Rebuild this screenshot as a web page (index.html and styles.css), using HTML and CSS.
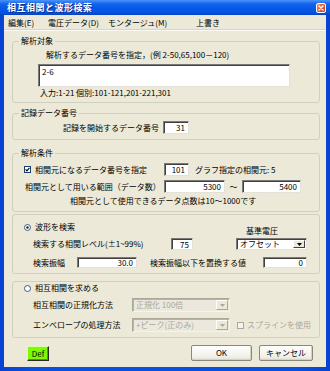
FILE: index.html
```html
<!DOCTYPE html>
<html lang="ja">
<head>
<meta charset="utf-8">
<title>相互相関と波形検索</title>
<link rel="stylesheet" href="styles.css">
</head>
<body>
<div class="window">
  <div class="titlebar">
    <span class="title">相互相関と波形検索</span>
    <span class="close">
      <svg width="10" height="10" viewBox="0 0 10 10">
        <defs>
          <linearGradient id="cg" x1="0" y1="0" x2="1" y2="1">
            <stop offset="0" stop-color="#f08a6a"/>
            <stop offset="1" stop-color="#c83a12"/>
          </linearGradient>
        </defs>
        <rect x="0.5" y="0.5" width="9" height="9" rx="1.5" fill="url(#cg)" stroke="#fff" stroke-width="1"/>
        <path d="M3 3 L7 7 M7 3 L3 7" stroke="#fff" stroke-width="1.4" stroke-linecap="round"/>
      </svg>
    </span>
  </div>
  <div class="client">
    <div class="menubar">
      <span class="menu m1">編集(E)</span>
      <span class="menu m2">電圧データ(D)</span>
      <span class="menu m3">モンタージュ(M)</span>
      <span class="menu m4">上書き</span>
    </div>
    <div class="content">
      <fieldset class="group g1">
        <legend>解析対象</legend>
        <div class="hint">解析するデータ番号を指定，(例 2-50,65,100－120)</div>
        <div class="textarea">2-6</div>
        <div class="inputinfo">入力:1-21 個別:101-121,201-221,301</div>
      </fieldset>

      <fieldset class="group g2">
        <legend>記録データ番号</legend>
        <div class="rec-row">
          <span class="rec-label">記録を開始するデータ番号</span>
          <span class="field num w26">31</span>
        </div>
      </fieldset>

      <fieldset class="group g3">
        <legend>解析条件</legend>
        <div class="cond-row1">
          <span class="check-label">
            <span class="check">
              <svg width="7" height="7" viewBox="0 0 7 7"><rect x="0.5" y="0.5" width="6" height="6" fill="#fff" stroke="#1c3f6e"/><path d="M1.6 3.4 L2.9 4.8 L5.4 1.8" fill="none" stroke="#000" stroke-width="1.1"/></svg>
            </span>
            相関元になるデータ番号を指定
          </span>
          <span class="field num w25">101</span>
          <span class="graph-src">グラフ指定の相関元: 5</span>
        </div>
        <div class="cond-row2">
          <span class="range-label">相関元として用いる範囲（データ数）</span>
          <span class="field num w61">5300</span>
          <span class="tilde">～</span>
          <span class="field num w59">5400</span>
        </div>
        <div class="cond-note">相関元として使用できるデータ点数は10～1000です</div>
      </fieldset>

      <div class="box box-search">
        <div class="search-rowa">
          <span class="radio-label">
            <span class="radio">
              <svg width="7" height="7" viewBox="0 0 7 7"><circle cx="3.5" cy="3.5" r="3" fill="#fff" stroke="#3a5a80"/><circle cx="3.5" cy="3.5" r="1.2" fill="#222"/></svg>
            </span>
            波形を検索
          </span>
          <span class="ref-label">基準電圧</span>
        </div>
        <div class="search-rowb">
          <span class="level-label">検索する相関レベル(±1~99%)</span>
          <span class="field num w22">75</span>
          <span class="select w71">
            <span class="select-text">オフセット</span>
            <span class="select-btn"><svg width="5" height="3" viewBox="0 0 5 3"><path d="M0 0 H5 L2.5 3 Z" fill="#000"/></svg></span>
          </span>
        </div>
        <div class="search-rowc">
          <span class="amp-label">検索振幅</span>
          <span class="field num w60">30.0</span>
          <span class="repl-label">検索振幅以下を置換する値</span>
          <span class="field num w44">0</span>
        </div>
      </div>

      <div class="box box-corr">
        <div class="corr-rowa">
          <span class="radio-label">
            <span class="radio">
              <svg width="7" height="7" viewBox="0 0 7 7"><circle cx="3.5" cy="3.5" r="3" fill="#fff" stroke="#3a5a80"/></svg>
            </span>
            相互相関を求める
          </span>
        </div>
        <div class="corr-row">
          <span class="corr-label">相互相関の正規化方法</span>
          <span class="select disabled w98">
            <span class="select-text">正規化 100倍</span>
            <span class="select-btn"><svg width="5" height="3" viewBox="0 0 5 3"><path d="M0 0 H5 L2.5 3 Z" fill="#aca899"/></svg></span>
          </span>
        </div>
        <div class="corr-row">
          <span class="corr-label">エンベロープの処理方法</span>
          <span class="select disabled w98">
            <span class="select-text">+ピーク(正のみ)</span>
            <span class="select-btn"><svg width="5" height="3" viewBox="0 0 5 3"><path d="M0 0 H5 L2.5 3 Z" fill="#aca899"/></svg></span>
          </span>
          <span class="spline">
            <span class="check">
              <svg width="7" height="7" viewBox="0 0 7 7"><rect x="0.5" y="0.5" width="6" height="6" fill="#f4f3ee" stroke="#aca899"/></svg>
            </span>
            <span class="spline-text">スプラインを使用</span>
          </span>
        </div>
      </div>

      <div class="buttons">
        <span class="btn-def">Def</span>
        <span class="btn ok">OK</span>
        <span class="btn cancel">キャンセル</span>
      </div>
    </div>
  </div>
</div>
</body>
</html>
```
FILE: styles.css
```css
* { box-sizing: border-box; }
html, body { margin: 0; padding: 0; }
body {
  width: 330px;
  height: 371px;
  overflow: hidden;
  font-family: "Noto Sans CJK JP", "Noto Sans", sans-serif;
  font-size: 8px;
  line-height: 10px;
  color: #000;
  background: #0a4fdf;
}
.window {
  width: 330px;
  height: 371px;
  display: flex;
  flex-direction: column;
  background: linear-gradient(90deg, #0842d0, #0a50e0 10%, #0a50e0 90%, #0842d0);
}
.titlebar {
  height: 15px;
  flex: none;
  display: flex;
  align-items: center;
  justify-content: space-between;
  padding: 0 4px 0 7px;
  background: linear-gradient(#4a95f8 0%, #1664ec 25%, #0558e6 55%, #0652e0 85%, #0443c6 100%);
}
.title {
  color: #fff;
  font-weight: bold;
  font-size: 9px;
  letter-spacing: 0.5px;
  text-shadow: 1px 1px 0 #0a2d8a;
  line-height: 12px;
}
.close { width: 10px; height: 10px; display: flex; }
.client {
  flex: 1;
  margin: 0 4px 4px;
  background: #ece9d8;
  display: flex;
  flex-direction: column;
}
.menubar {
  height: 16px;
  flex: none;
  display: flex;
  align-items: center;
  padding-left: 4px;
  border-bottom: 1px solid #fbfaf6;
  box-shadow: 0 -1px 0 #d9d5c3 inset;
}
.menu { white-space: nowrap; }
.m1 { width: 40px; }
.m2 { width: 60px; }
.m3 { width: 88px; }
.m4 { width: 30px; }

.content {
  padding: 0 6px 0 8px;
  display: flex;
  flex-direction: column;
}
.group {
  margin: 0;
  padding: 0 0 4px;
  border: 1px solid #d0d0bf;
  border-radius: 3px;
  min-width: 0;
}
.group legend {
  padding: 0 2px;
  margin-left: 6px;
  line-height: 10px;
  white-space: nowrap;
}
.g1 { margin-top: 5px; }
.g2 { margin-top: 5px; padding-bottom: 5px; }
.g3 { margin-top: 8px; padding-bottom: 5px; }

.hint { margin-top: 4px; padding-left: 33px; white-space: nowrap; }
.textarea {
  margin: 4px 0 0 25px;
  width: 252px;
  height: 23px;
  background: #fff;
  border: 1px solid;
  border-color: #7a7a7a #e4e2d8 #e4e2d8 #7a7a7a;
  box-shadow: inset 1px 1px 0 #404040;
  padding: 2px 3px;
  line-height: 10px;
}
.inputinfo { margin-top: 1px; padding-left: 27px; white-space: nowrap; }

.field {
  display: flex;
  align-items: center;
  background: #fff;
  border: 1px solid;
  border-color: #7a7a7a #e4e2d8 #e4e2d8 #7a7a7a;
  box-shadow: inset 1px 1px 0 #404040;
  height: 100%;
  padding: 0 3px;
  white-space: nowrap;
  line-height: 9px;
}
.field.num { justify-content: flex-end; }
.w22 { width: 22px; }
.w25 { width: 25px; }
.w26 { width: 26px; }
.w44 { width: 44px; }
.w59 { width: 59px; }
.w60 { width: 60px; }
.w61 { width: 61px; }
.w71 { width: 71px; }
.w98 { width: 98px; }

.rec-row {
  margin-top: 3px;
  height: 13px;
  display: flex;
  align-items: center;
}
.rec-label { width: 150px; text-align: right; padding-right: 4px; white-space: nowrap; }

.cond-row1 {
  margin-top: 5px;
  height: 13px;
  display: flex;
  align-items: center;
  padding-left: 11px;
}
.check-label { width: 140px; display: flex; align-items: center; white-space: nowrap; }
.check { width: 7px; height: 7px; display: flex; margin-right: 4px; flex: none; }
.graph-src { margin-left: 6px; white-space: nowrap; }

.cond-row2 {
  margin-top: 4px;
  height: 13px;
  display: flex;
  align-items: center;
  padding-left: 12px;
}
.range-label { width: 139px; white-space: nowrap; }
.tilde { width: 17px; text-align: center; }
.cond-note { margin-top: 3px; padding-left: 57px; white-space: nowrap; }

.box {
  border: 1px solid #d0d0bf;
  border-radius: 3px;
  display: flex;
  flex-direction: column;
}
.box-search { margin-top: 2px; padding-bottom: 5px; }
.box-corr { margin-top: 7px; padding-bottom: 5px; }

.radio-label { display: flex; align-items: center; white-space: nowrap; }
.radio { width: 7px; height: 7px; display: flex; margin-right: 4px; flex: none; }

.search-rowa {
  margin-top: 7px;
  height: 10px;
  display: flex;
  align-items: flex-start;
  padding-left: 11px;
}
.search-rowa .radio-label { width: 222px; height: 10px; }
.ref-label { margin-top: 4px; white-space: nowrap; }

.search-rowb {
  margin-top: 6px;
  height: 12px;
  display: flex;
  align-items: center;
  padding-left: 20px;
}
.level-label { width: 138px; white-space: nowrap; }
.search-rowb .select { margin-left: 43px; }

.search-rowc {
  margin-top: 7px;
  height: 11px;
  display: flex;
  align-items: center;
  padding-left: 20px;
}
.amp-label { width: 44px; white-space: nowrap; }
.repl-label { width: 113px; margin-left: 13px; white-space: nowrap; }

.select {
  height: 100%;
  display: flex;
  align-items: stretch;
  background: #fff;
  border: 1px solid;
  border-color: #7a7a7a #e4e2d8 #e4e2d8 #7a7a7a;
  box-shadow: inset 1px 1px 0 #404040;
  padding: 1px;
}
.select-text {
  flex: 1;
  min-width: 0;
  padding-left: 2px;
  display: flex;
  align-items: center;
  white-space: nowrap;
  line-height: 8px;
}
.select-btn {
  width: 12px;
  flex: none;
  display: flex;
  align-items: center;
  justify-content: center;
  background: #ece9d8;
  border: 1px solid;
  border-color: #fff #404040 #404040 #fff;
}
.select.disabled { background: #ebe9dd; box-shadow: inset 1px 1px 0 #b8b4a4; border-color: #aca899 #f4f3ee #f4f3ee #aca899; }
.select.disabled .select-text { color: #aca899; }
.select.disabled .select-btn { border-color: #fff #aca899 #aca899 #fff; }

.corr-rowa {
  margin-top: 1px;
  height: 10px;
  display: flex;
  align-items: center;
  padding-left: 11px;
}
.corr-row {
  margin-top: 5px;
  height: 14px;
  display: flex;
  align-items: center;
  padding-left: 20px;
}
.corr-row + .corr-row { margin-top: 6px; }
.corr-label { width: 99px; white-space: nowrap; }
.spline { display: flex; align-items: center; margin-left: 7px; }
.spline .check { margin-right: 3px; }
.spline-text { color: #aca899; white-space: nowrap; }

.buttons {
  margin-top: 7px;
  height: 16px;
  display: flex;
  align-items: flex-end;
  padding-left: 15px;
  padding-right: 7px;
}
.btn-def {
  width: 22px;
  height: 15px;
  display: flex;
  align-items: center;
  justify-content: center;
  background: #7cfc00;
  border: 1px solid;
  border-color: #d8ffb0 #2a2a2a #2a2a2a #d8ffb0;
  box-shadow: inset -1px -1px 0 #4aa000;
}
.btn {
  height: 16px;
  display: flex;
  align-items: center;
  justify-content: center;
  background: linear-gradient(#fefefd, #f3f2ec 70%, #e3e1d8);
  border: 1px solid #8a8878;
  border-radius: 2px;
  box-shadow: inset -1px -1px 0 #d6d2c2;
}
.ok { width: 61px; margin-left: auto; }
.cancel { width: 54px; margin-left: 7px; }
```
